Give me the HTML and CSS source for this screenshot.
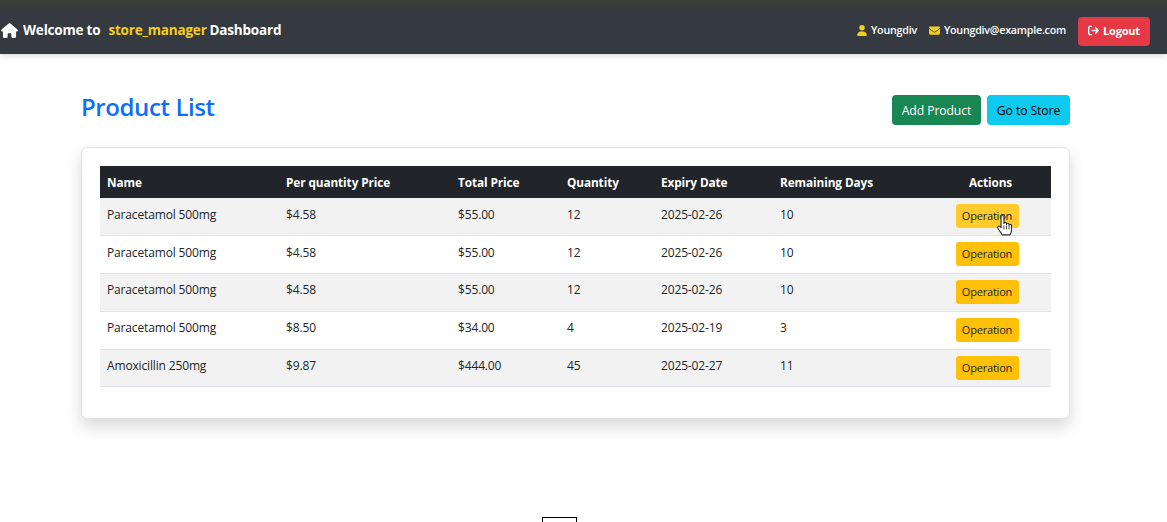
FILE: index.html
```html
<!DOCTYPE html>
<html lang="en">
<head>
<meta charset="utf-8">
<title>Product List</title>
<link rel="stylesheet" href="styles.css">
</head>
<body>
<div class="topstrip"></div>
<nav class="navbar">
  <div class="brand">
    <svg class="home" viewBox="0 0 576 512" width="17" height="15"><path fill="#fff" d="M575.8 255.500c0 18-15 32.100-32 32.100h-32l.7 160.200c0 2.700-.2 5.400-.5 8.100V472c0 22.100-17.900 40-40 40H456c-1.100 0-2.200 0-3.300-.1-1.400.1-2.800.1-4.200.1H416 392c-22.100 0-40-17.900-40-40V448 384c0-17.700-14.300-32-32-32H256c-17.700 0-32 14.300-32 32v64 24c0 22.100-17.900 40-40 40H160 128.100c-1.500 0-3-.1-4.500-.2-1.200.1-2.400.2-3.600.2H104c-22.100 0-40-17.900-40-40V360c0-.9 0-1.900.1-2.800V287.600H32c-18 0-32-14-32-32.100 0-9 3-17 10-24L266.400 8c7-7 15-8 22-8s15 2 21 7L564.800 231.500c8 7 12 15 11 24z"/></svg>
    <span>Welcome to</span>
    <span class="accent">store_manager</span>
    <span class="last">Dashboard</span>
  </div>
  <div class="userinfo">
    <span class="info">
      <svg viewBox="0 0 448 512" width="10" height="11"><path fill="#f5cf17" d="M224 256a128 128 0 1 0 0-256 128 128 0 1 0 0 256zm-45.700 48C79.800 304 0 383.800 0 482.300 0 498.700 13.300 512 29.700 512h388.600c16.400 0 29.700-13.300 29.700-29.700 0-98.500-79.800-178.300-178.300-178.300h-91.400z"/></svg>
      Youngdiv
    </span>
    <span class="info">
      <svg viewBox="0 0 512 512" width="11" height="11"><path fill="#f5cf17" d="M48 64C21.500 64 0 85.500 0 112c0 15.100 7.100 29.300 19.200 38.400l217.600 163.200c11.400 8.500 27 8.500 38.400 0l217.600-163.200c12.100-9.100 19.200-23.300 19.200-38.400 0-26.500-21.500-48-48-48H48zM0 176v208c0 35.300 28.700 64 64 64h384c35.300 0 64-28.700 64-64V176L294.400 339.200c-22.800 17.100-54 17.100-76.800 0L0 176z"/></svg>
      Youngdiv@example.com
    </span>
    <button class="logout">
      <svg viewBox="0 0 512 512" width="11" height="11"><path fill="#fff" d="M502.600 278.600c12.500-12.500 12.500-32.800 0-45.300l-128-128c-12.500-12.500-32.800-12.500-45.300 0s-12.500 32.800 0 45.300l73.400 73.400H192c-17.700 0-32 14.300-32 32s14.300 32 32 32h210.700l-73.400 73.400c-12.500 12.500-12.500 32.800 0 45.300s32.800 12.500 45.300 0l128-128zM160 96c17.700 0 32-14.300 32-32s-14.300-32-32-32H96C43 32 0 75 0 128v256c0 53 43 96 96 96h64c17.700 0 32-14.300 32-32s-14.300-32-32-32H96c-17.700 0-32-14.300-32-32V128c0-17.700 14.300-32 32-32h64z"/></svg>
      Logout
    </button>
  </div>
</nav>
<main class="container">
  <header class="pagehead">
    <h1>Product List</h1>
    <div class="actions">
      <button class="btn green">Add Product</button>
      <button class="btn cyan">Go to Store</button>
    </div>
  </header>
  <section class="card">
    <table>
      <colgroup>
        <col class="c1"><col class="c2"><col class="c3"><col class="c4"><col class="c5"><col class="c6"><col class="c7">
      </colgroup>
      <thead>
        <tr><th>Name</th><th>Per quantity Price</th><th>Total Price</th><th>Quantity</th><th>Expiry Date</th><th>Remaining Days</th><th class="center">Actions</th></tr>
      </thead>
      <tbody>
        <tr class="odd"><td>Paracetamol 500mg</td><td>$4.58</td><td>$55.00</td><td>12</td><td>2025-02-26</td><td>10</td><td class="center"><span class="opwrap"><button class="op hover">Operation</button><svg class="cursor" viewBox="0 0 16 20" width="18" height="23"><path fill="#fff" stroke="#333" stroke-width="1" stroke-linejoin="round" d="M4.500 2.200c0-1.500 2.500-1.500 2.500 0v6c0-1.300 2.300-1.300 2.300 0v.8c0-1.300 2.300-1.300 2.300 0v.9c0-1.200 2.200-1.200 2.200.2v4.400c0 1.500-.8 2.300-1.200 3.800H5.500c-.6-1.500-2-3-3.700-5.700-.9-1.500.6-2.900 1.700-1.800l1 1.100z"/><path stroke="#333" stroke-width=".8" d="M7 10v3.500M9.300 10v3.500M11.600 10.500v3"/></svg></span></td></tr>
        <tr><td>Paracetamol 500mg</td><td>$4.58</td><td>$55.00</td><td>12</td><td>2025-02-26</td><td>10</td><td class="center"><button class="op">Operation</button></td></tr>
        <tr class="odd"><td>Paracetamol 500mg</td><td>$4.58</td><td>$55.00</td><td>12</td><td>2025-02-26</td><td>10</td><td class="center"><button class="op">Operation</button></td></tr>
        <tr><td>Paracetamol 500mg</td><td>$8.50</td><td>$34.00</td><td>4</td><td>2025-02-19</td><td>3</td><td class="center"><button class="op">Operation</button></td></tr>
        <tr class="odd"><td>Amoxicillin 250mg</td><td>$9.87</td><td>$444.00</td><td>45</td><td>2025-02-27</td><td>11</td><td class="center"><button class="op">Operation</button></td></tr>
      </tbody>
    </table>
  </section>
</main>
<div class="footbox"></div>
</body>
</html>
```
FILE: styles.css
```css
* { box-sizing: border-box; }
html, body { height: 100%; }
body {
  margin: 0;
  height: 522px;
  overflow: hidden;
  background: #fff;
  color: #212529;
  font-family: "Open Sans", "Noto Sans", "Liberation Sans", sans-serif;
  font-size: 12px;
  display: flex;
  flex-direction: column;
}
button { font-family: inherit; border: 0; cursor: pointer; }
.topstrip { height: 8px; background: #3a3f3a; flex: none; }
.navbar {
  flex: none;
  height: 46px;
  background: #343a40;
  box-shadow: 0 2px 6px rgba(0,0,0,.15);
  display: flex;
  align-items: center;
  justify-content: space-between;
  padding: 0 17px 0 0;
  color: #fff;
}
.brand {
  display: flex;
  align-items: center;
  font-size: 13.500px;
  font-weight: 700;
  letter-spacing: -.2px;
  gap: 4px;
  padding-bottom: 2px;
}
.brand .home { margin: 1px 1px 0 1px; }
.brand .accent { color: #f5cf17; margin-left: 4px; }
.brand .last { margin-left: -1px; }
.userinfo { display: flex; align-items: center; font-size: 10.700px; font-weight: 600; letter-spacing: -.22px; }
.info { display: inline-flex; align-items: center; gap: 4px; margin-right: 12px; padding-bottom: 2px; }
.logout {
  height: 29px;
  width: 72px;
  border-radius: 4px;
  background: #e63946;
  color: #fff;
  font-size: 11px;
  font-weight: 700;
  display: inline-flex;
  align-items: center;
  justify-content: center;
  gap: 4px;
  letter-spacing: -.2px;
  padding: 0 0 2px;
}
.container { width: 989px; margin: 0 auto 0 81px; }
.pagehead {
  display: flex;
  justify-content: space-between;
  align-items: center;
  height: 93px;
  padding-top: 12px;
}
h1 { margin: 0; font-size: 24px; font-weight: 550; color: #0d6efd; letter-spacing: -.4px; }
.actions { display: flex; gap: 6px; padding-top: 7px; }
.btn {
  height: 30px;
  border-radius: 4px;
  font-size: 12.200px;
  padding: 0;
  letter-spacing: -.1px;
}
.green { width: 89px; background: #198754; color: #fff; }
.cyan { width: 83px; background: #0dcaf0; color: #000; }
.card {
  height: 272px;
  background: #fff;
  border: 1px solid #dee2e6;
  border-radius: 6px;
  box-shadow: 0 8px 16px rgba(0,0,0,.15);
  padding: 18px;
}
table { width: 951px; border-collapse: collapse; table-layout: fixed; }
.c1 { width: 179px; } .c2 { width: 172px; } .c3 { width: 109px; } .c4 { width: 94px; }
.c5 { width: 119px; } .c6 { width: 157px; } .c7 { width: 121px; }
th {
  background: #212529;
  color: #fff;
  text-align: left;
  font-weight: 700;
  height: 32px;
  padding: 0 7px;
  font-size: 11.800px;
  letter-spacing: -.1px;
}
td {
  height: 37.800px;
  padding: 0 7px 5px;
  border-bottom: 1px solid #dee2e6;
  font-size: 12px;
  letter-spacing: -.15px;
  color: #212529;
}
tr.odd td { background: #f2f2f2; }
.center { text-align: center; }
td.center { padding: 0 7px 1px 0; }
th.center { padding: 0 7px; }
.op {
  width: 63px;
  height: 24px;
  background: #ffc107;
  color: #212529;
  border-radius: 3px;
  font-size: 11px;
  padding: 0 0 1px;
  letter-spacing: -.2px;
  display: inline-block;
  vertical-align: middle;
}
.op.hover { background: #ffca2c; }
.opwrap { position: relative; display: inline-block; }
.cursor { position: absolute; left: 40px; top: 10px; }
.footbox {
  position: absolute;
  left: 542px;
  top: 517px;
  width: 35px;
  height: 20px;
  border: 1px solid #000;
  background: #fff;
}
```
